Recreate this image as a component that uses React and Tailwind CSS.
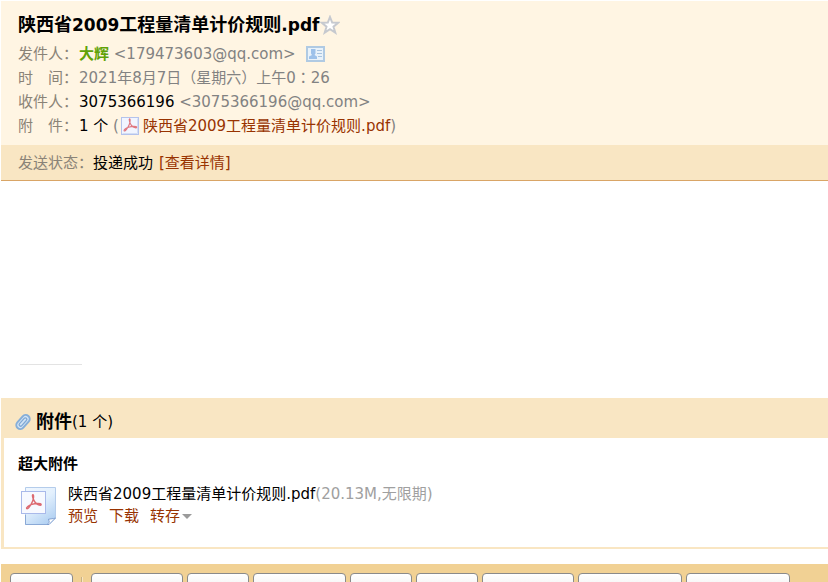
const FILE_NAME = "陕西省2009工程量清单计价规则.pdf"

const toolbar = [
  { label: "返回", width: "w-[63px]" },
  { label: "再次编辑", width: "w-[92px]", divider: true },
  { label: "转发", width: "w-[62px]" },
  { label: "撤回邮件", width: "w-[93px]" },
  { label: "删除", width: "w-[62px]" },
  { label: "举报", width: "w-[62px]" },
  { label: "彻底删除", width: "w-[92px]" },
  { label: "标记为", width: "w-[104px]" },
  { label: "移动到", width: "w-[104px]" },
]

function StarIcon() {
  return (
    <svg width="20" height="20" viewBox="0 0 20 20" aria-hidden="true">
      <path
        d="M10 2 L12.2 7.6 L18.2 7.8 L13.5 11.7 L15.3 17.6 L10 14.2 L4.7 17.6 L6.5 11.7 L1.8 7.8 L7.8 7.6 Z"
        fill="#fff"
        stroke="#c6c9cf"
        strokeWidth="2"
      />
    </svg>
  )
}

function CardIcon() {
  return (
    <svg width="19" height="16" viewBox="0 0 19 16" aria-hidden="true">
      <rect x="1" y="1" width="17" height="14" fill="#e9f2fa" stroke="#b0cae3" strokeWidth="2" />
      <path d="M5 3h4.500v4.500l-1 1.500 2.500 1.500V13H3v-2.500L6 9 5 7.500Z" fill="#9dc1ea" />
      <path d="M11 4.500h5M11 7.500h5M12 10.500h4" stroke="#a9c4e0" />
    </svg>
  )
}

const ACROBAT = "M9 2.5C7.8 3 9.6 7.5 11 9.3c1.5 2 5 3.6 5.5 2.2.4-1.5-5.5-1.2-8.5-.2-2.8 1-5.500 2.700-4.700 3.800C4.400 16.200 7.500 11.500 8.700 8.500 9.700 6 10 2.500 9 2.500Z"

function PdfIcon() {
  return (
    <svg width="18" height="18" viewBox="0 0 18 18" aria-hidden="true">
      <rect x="0.5" y="0.5" width="17" height="17" fill="#f1f5ff" stroke="#b4c3ec" />
      <path d="M1.5 16.500h15v-15" fill="none" stroke="#d3def5" />
      <path d={ACROBAT} fill="none" stroke="#e07880" strokeWidth="1.2" transform="translate(0 -0.5) scale(0.95)" />
    </svg>
  )
}

function PdfFileIcon() {
  return (
    <svg width="36" height="38" viewBox="0 0 36 38" aria-hidden="true">
      <defs>
        <linearGradient id="sheet" x1="0" y1="0" x2="0.6" y2="1">
          <stop offset="0" stopColor="#f0f7ff" />
          <stop offset="0.5" stopColor="#e3f0fd" />
          <stop offset="1" stopColor="#b5d3f3" />
        </linearGradient>
      </defs>
      <path d="M4.5 0.5H34.5V31L28 37.5H4.5Z" fill="url(#sheet)" stroke="#b4cceb" />
      <path d="M4.500 28V37.500H28" fill="none" stroke="#8aa9d6" />
      <path d="M34.5 31C32 32 30 31.5 27 32.5 29 34 28.5 36 26 37.5H28Z" fill="#fff" stroke="#7f9fd0" />
      <rect x="0.5" y="4.5" width="24" height="22" fill="#f7f9ff" stroke="#a9b9ea" />
      <path d={ACROBAT} fill="none" stroke="#dc6a72" strokeWidth="1.3" transform="translate(2 5) scale(1.1)" />
    </svg>
  )
}

function ClipIcon() {
  return (
    <svg width="18" height="18" viewBox="0 0 18 18" fill="none" strokeLinecap="round" aria-hidden="true">
      <g transform="rotate(42 9 9)">
        <rect x="5" y="1" width="8" height="16" rx="4" fill="#d3e4f5" stroke="#86aed8" strokeWidth="2" />
        <path d="M10.500 6v6.500a1.500 1.500 0 0 1-3 0V5.500a1.500 1.500 0 0 1 3 0" stroke="#7fa8d4" strokeWidth="1.300" />
      </g>
    </svg>
  )
}

function Row({ label, children }) {
  return (
    <div className="flex items-center">
      <dt className="w-[61px] shrink-0 text-[#8a8377] whitespace-pre">{label}</dt>
      <dd className="flex items-center whitespace-pre">{children}</dd>
    </div>
  )
}

function MailHeader() {
  return (
    <header>
      <div className="bg-[#fff5e3] px-[17px] pt-[7px] pb-[7px]">
        <div className="flex items-center h-[34px]">
          <h1 className="text-lg font-bold leading-8">
            陕西省<span className="text-[17px]">2009</span>工程量清单计价规则<span className="text-[17px]">.pdf</span>
          </h1>
          <button type="button" aria-label="星标">
            <StarIcon />
          </button>
        </div>
        <dl className="leading-6 text-[#828282]">
          <Row label="发件人：">
            <b className="text-[#5fa207]">大辉</b> &lt;179473603@qq.com&gt;
            <button type="button" aria-label="联系人" className="ml-2.5">
              <CardIcon />
            </button>
          </Row>
          <Row label="时　间：">
            2021年8月7日（星期六）上午0
            <span className="font-['DejaVu_Sans','Noto_Sans_CJK_TC',sans-serif]" lang="zh-TW">：</span>
            26
          </Row>
          <Row label="收件人：">
            <span className="text-black">3075366196</span> &lt;3075366196@qq.com&gt;
          </Row>
          <Row label="附　件：">
            <span className="text-black">1 个</span> (
            <span className="mx-0.5"><PdfIcon /></span>
            <a href="#attachments" className="ml-0.5 text-[#983301]">{FILE_NAME}</a>)
          </Row>
        </dl>
      </div>
      <div className="flex items-center h-9 bg-[#f9e6c3] border-b border-[#d9a566] px-[17px] pt-0.5">
        <span className="w-[75px] text-[#8a8377]">发送状态：</span>
        <span>投递成功</span>
        <a href="#status" className="ml-1.5 text-[#983301]">[查看详情]</a>
      </div>
    </header>
  )
}

function Attachments() {
  return (
    <section id="attachments">
      <div className="flex items-center h-10 bg-[#f9e6c3] pl-[13px] pt-2">
        <ClipIcon />
        <h2 className="ml-1 text-lg font-bold">附件</h2>
        <span>(1 个)</span>
      </div>
      <div className="border-l-[3px] border-b-2 border-[#f9e6c3] pl-[14px] pt-[14px] pb-5">
        <h3 className="font-bold leading-6">超大附件</h3>
        <div className="flex mt-[7px]">
          <div className="ml-[3px] mt-1">
            <PdfFileIcon />
          </div>
          <div className="ml-[11px] leading-[22px]">
            <p>
              {FILE_NAME}
              <span className="text-[#a0a0a0]">(20.13M,无限期)</span>
            </p>
            <div className="flex gap-[11px] text-[#983301]">
              <a href="#preview">预览</a>
              <a href="#download">下载</a>
              <button type="button" className="flex items-center gap-0.5">
                转存
                <svg width="10" height="5" viewBox="0 0 10 5" aria-hidden="true">
                  <path d="M0 0h10L5 5Z" fill="#9b9b9b" />
                </svg>
              </button>
            </div>
          </div>
        </div>
      </div>
    </section>
  )
}

export default function App() {
  return (
    <div className="h-screen overflow-hidden bg-white pl-px pt-px text-[15px] text-black font-['DejaVu_Sans','Noto_Sans_CJK_SC',sans-serif]" lang="zh-CN">
      <MailHeader />
      <main className="pt-[183px] pb-[33px] pl-[19px]">
        <hr className="w-[62px] border-[#e3e3e3]" />
      </main>
      <Attachments />
      <nav className="flex gap-1 mt-[15px] bg-[#f1d194] py-[9px] pl-[9px]">
        {toolbar.map((item) => (
          <div key={item.label} className="flex shrink-0">
            {item.divider && <span className="w-0.5 ml-1 mr-2 mt-1 bg-[#f8e6c3] border-l border-[#c9b080]" />}
            <button
              type="button"
              aria-label={item.label}
              className={`h-7 rounded border border-[#8a8a8a] bg-linear-to-b from-white to-[#e8e8e8] ${item.width}`}
            />
          </div>
        ))}
      </nav>
    </div>
  )
}
